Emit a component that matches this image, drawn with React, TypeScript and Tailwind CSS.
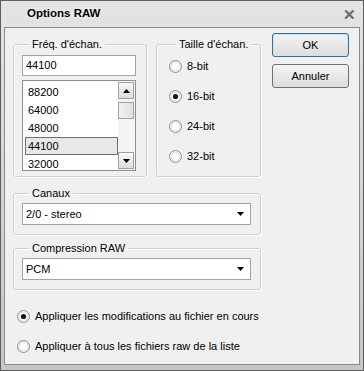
import React from 'react';

// Options RAW - classic Windows dialog

const Radio = ({ checked }: { checked?: boolean }) => (
  <svg width="13" height="13" viewBox="0 0 13 13" className="shrink-0">
    <circle cx="6.5" cy="6.5" r="6" fill="#f6f6f6" stroke="#8e8f8f" strokeWidth="1" />
    <circle cx="6.5" cy="6.5" r="4.5" fill="#ffffff" stroke="#dcdcdc" strokeWidth="1" />
    {checked && <circle cx="6.5" cy="6.5" r="2.6" fill="#151515" />}
  </svg>
);

const ArrowDown = () => (
  <svg width="7" height="4" viewBox="0 0 7 4"><polygon points="0,0 7,0 3.5,4" fill="#000" /></svg>
);
const ArrowUp = () => (
  <svg width="7" height="4" viewBox="0 0 7 4"><polygon points="0,4 7,4 3.5,0" fill="#000" /></svg>
);

const Group = ({ title, className, children }: { title: string; className?: string; children: React.ReactNode }) => (
  <fieldset className={`border border-[#d0d0d0] rounded-[3px] shadow-[inset_1px_1px_0_#ffffff,1px_1px_0_#ffffff] ${className ?? ''}`}>
    <legend className="ml-[7px] px-[3px] leading-[13px]">{title}</legend>
    {children}
  </fieldset>
);

const Select = ({ value }: { value: string }) => (
  <div className="flex items-center h-[22px] bg-white border border-[#a3a3a3] pl-[3px] pr-[6px]">
    <span className="flex-1">{value}</span>
    <ArrowDown />
  </div>
);

export default function App() {
  const rates = ['88200', '64000', '48000', '44100', '32000'];
  const bits = ['8-bit', '16-bit', '24-bit', '32-bit'];

  return (
    <div className="w-[364px] h-[371px] flex flex-col border border-[#5e5e5e] bg-gradient-to-b from-[#e4e4e4] to-[#c6c6c6] font-['Liberation_Sans',Arial,sans-serif] text-[11px] text-black select-none">
      {/* title bar */}
      <div className="h-[26px] flex items-center pl-[26px] pr-[7px]">
        <span className="flex-1 font-bold text-[11.5px] [text-shadow:0_0_4px_#ffffff]">Options RAW</span>
        <span className="text-[#6a6a6a] text-[15px] font-bold leading-none">✕</span>
      </div>

      {/* body */}
      <div className="flex-1 mx-[3px] mb-[5px] border border-[#8c8c8c] bg-[#f0f0f0] pt-[10px] pl-[8px] flex flex-col">
        <div className="flex gap-[11px]">
          <div className="w-[248px] flex flex-col">
            <div className="flex gap-[9px]">
              <Group title="Fréq. d'échan." className="w-[134px] h-[139px] pl-[8px]">
                <div className="mt-[4px] w-[114px] h-[21px] bg-white border border-[#a3a3a3] pl-[3px] flex items-center">44100</div>
                <div className="mt-[4px] w-[114px] h-[91px] bg-white border border-[#8e8e8e] flex">
                  <div className="flex-1 pt-[2px] pl-[2px] overflow-hidden">
                    {rates.map((r) => (
                      <div
                        key={r}
                        className={`h-[18px] pl-[2px] flex items-center border ${r === '44100' ? 'bg-[#e8e8e8] border-[#6f6f6f]' : 'border-transparent'}`}
                      >
                        {r}
                      </div>
                    ))}
                  </div>
                  <div className="w-[17px] flex flex-col bg-[#f4f4f4] py-[1px] pr-[1px]">
                    <div className="h-[17px] border border-[#a0a0a0] bg-gradient-to-b from-[#f8f8f8] to-[#dedede] flex items-center justify-center"><ArrowUp /></div>
                    <div className="mt-[3px] h-[17px] border border-[#a0a0a0] bg-gradient-to-r from-[#f2f2f2] to-[#e0e0e0]" />
                    <div className="flex-1" />
                    <div className="h-[17px] border border-[#a0a0a0] bg-gradient-to-b from-[#f8f8f8] to-[#dedede] flex items-center justify-center"><ArrowDown /></div>
                  </div>
                </div>
              </Group>
              <Group title="Taille d'échan." className="w-[105px] h-[139px] pl-[12px]">
                {bits.map((b) => (
                  <div key={b} className="h-[30px] flex items-center gap-[5px]">
                    <Radio checked={b === '16-bit'} />
                    <span>{b}</span>
                  </div>
                ))}
              </Group>
            </div>

            <Group title="Canaux" className="mt-[10px] h-[48px] pl-[8px] pr-[9px]">
              <div className="mt-[3px]"><Select value="2/0 - stereo" /></div>
            </Group>

            <Group title="Compression RAW" className="mt-[7px] h-[48px] pl-[8px] pr-[9px]">
              <div className="mt-[3px]"><Select value="PCM" /></div>
            </Group>
          </div>

          <div className="w-[77px] flex flex-col gap-[7px] -mt-[5px]">
            <button className="h-[24px] rounded-[3px] border border-[#3c6f98] bg-gradient-to-b from-[#f4f4f4] to-[#dcdcdc] shadow-[inset_0_0_0_1px_#c9e4f6]">OK</button>
            <button className="h-[24px] rounded-[3px] border border-[#707070] bg-gradient-to-b from-[#f4f4f4] to-[#dcdcdc]">Annuler</button>
          </div>
        </div>

        <div className="mt-[11px] pl-[4px] flex flex-col">
          <div className="h-[30px] flex items-center gap-[5px]">
            <Radio checked />
            <span>Appliquer les modifications au fichier en cours</span>
          </div>
          <div className="h-[30px] flex items-center gap-[5px]">
            <Radio />
            <span>Appliquer à tous les fichiers raw de la liste</span>
          </div>
        </div>
      </div>
    </div>
  );
}
